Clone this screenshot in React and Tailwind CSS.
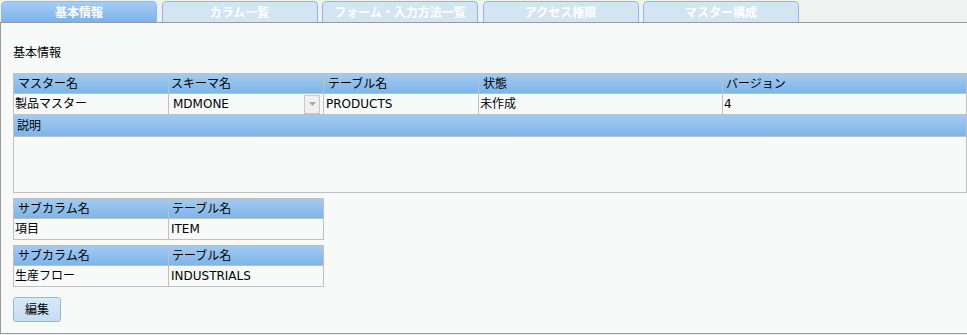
import React from "react";

const FONT = { fontFamily: '"DejaVu Sans","Noto Sans CJK JP",sans-serif' };

function Tab({ label, active }) {
  return (
    <div
      className={
        "w-[156px] h-[21px] rounded-t-[5px] border border-b-0 border-[#8dbbe9] flex items-center justify-center text-white font-bold text-[12px] " +
        (active
          ? "bg-gradient-to-b from-[#a6cdf3] to-[#7db3e8]"
          : "bg-[#d3e5f3]")
      }
      style={{ fontFamily: '"Noto Sans CJK JP",sans-serif' }}
    >
      {label}
    </div>
  );
}

const hdr = "bg-gradient-to-b from-[#a3cbf2] to-[#7eb4e8] flex items-center text-black";

function SubTable({ value1, value2 }) {
  return (
    <div className="w-[311px] border border-[#c0c0c0] bg-[#f8faf9]">
      <div className="grid grid-cols-[155px_1fr] h-[20px] border-b border-[#c0c0c0]">
        <div className={hdr + " border-r border-[#c0c0c0] pl-[4px]"}>サブカラム名</div>
        <div className={hdr + " pl-[3px]"}>テーブル名</div>
      </div>
      <div className="grid grid-cols-[155px_1fr] h-[20px]">
        <div className="border-r border-[#c0c0c0] pl-[1px] flex items-center">{value1}</div>
        <div className="pl-[2px] flex items-center">{value2}</div>
      </div>
    </div>
  );
}

export default function App() {
  const tabs = ["基本情報", "カラム一覧", "フォーム・入力方法一覧", "アクセス権限", "マスター構成"];
  return (
    <div className="w-[967px] h-[335px] bg-[#eef3f2] text-[12px] leading-[16px] text-black" style={FONT}>
      <div className="flex pl-[1px] pt-[1px] h-[22px] gap-[4.5px]">
        {tabs.map((t, i) => (
          <Tab key={t} label={t} active={i === 0} />
        ))}
      </div>
      <div className="h-[312px] border-t border-l border-b border-[#999999] bg-[#f8faf9] pl-[12px] pt-[22px]">
        <div className="h-[16px]">基本情報</div>
        <div className="mt-[12px] w-[954px] border border-[#c0c0c0]">
          <div className="grid grid-cols-[155px_155px_155px_244px_1fr] h-[20px] border-b border-[#c0c0c0]">
            <div className={hdr + " border-r border-[#c0c0c0] pl-[4px]"}>マスター名</div>
            <div className={hdr + " border-r border-[#c0c0c0] pl-[2px]"}>スキーマ名</div>
            <div className={hdr + " border-r border-[#c0c0c0] pl-[4px]"}>テーブル名</div>
            <div className={hdr + " border-r border-[#c0c0c0] pl-[4px]"}>状態</div>
            <div className={hdr + " pl-[3px]"}>バージョン</div>
          </div>
          <div className="grid grid-cols-[155px_155px_155px_244px_1fr] h-[21px] border-b border-[#c0c0c0]">
            <div className="border-r border-[#c0c0c0] pl-[1px] flex items-center">製品マスター</div>
            <div className="border-r border-[#c0c0c0] pl-[4px] flex items-center justify-between pr-[3px]">
              <span>MDMONE</span>
              <span className="w-[16px] h-[19px] border border-[#c8c8c8] bg-[#f0f0f0] flex items-center justify-center">
                <svg width="7" height="4" viewBox="0 0 7 4">
                  <path d="M0 0 L7 0 L3.5 4 Z" fill="#a8a8a8" />
                </svg>
              </span>
            </div>
            <div className="border-r border-[#c0c0c0] pl-[2px] flex items-center">PRODUCTS</div>
            <div className="border-r border-[#c0c0c0] pl-[1px] flex items-center">未作成</div>
            <div className="pl-[1px] flex items-center">4</div>
          </div>
          <div className={hdr + " h-[22px] border-b border-[#c0c0c0] pl-[3px]"}>説明</div>
          <div className="h-[55px]"></div>
        </div>
        <div className="mt-[5px] flex flex-col gap-[5px]">
          <SubTable value1="項目" value2="ITEM" />
          <SubTable value1="生産フロー" value2="INDUSTRIALS" />
        </div>
        <button className="mt-[10px] w-[48px] h-[25px] rounded-[3px] border border-[#8dbbe9] bg-gradient-to-b from-[#d8e9f8] to-[#c6ddf3] flex items-center justify-center text-black text-[12px]">
          編集
        </button>
      </div>
    </div>
  );
}
